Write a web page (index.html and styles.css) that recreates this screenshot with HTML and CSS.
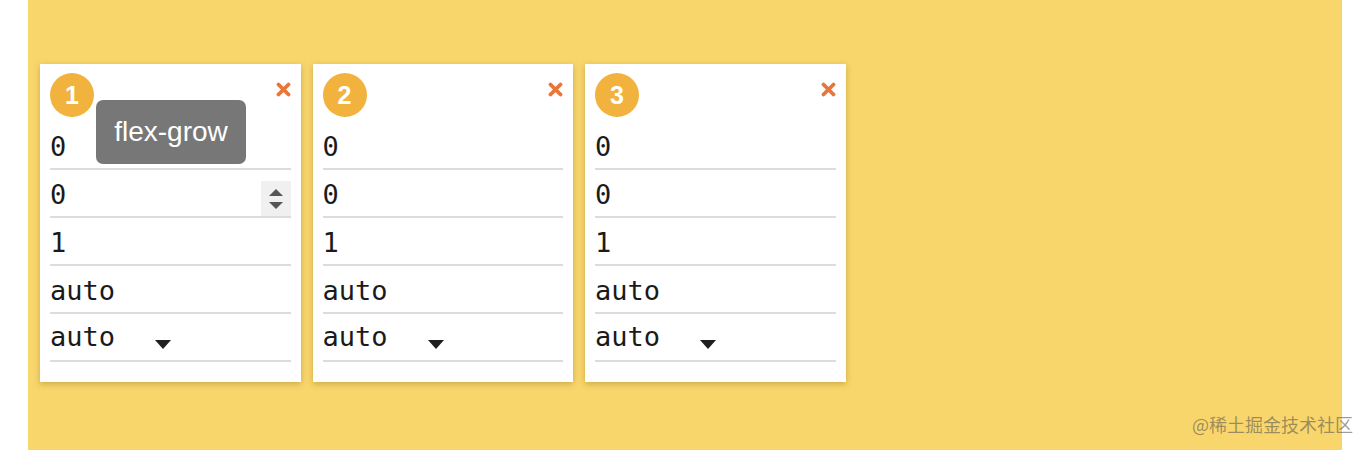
FILE: index.html
```html
<!DOCTYPE html>
<html lang="en">
<head>
<meta charset="utf-8">
<title>flex items</title>
<link rel="stylesheet" href="styles.css">
</head>
<body>
<div class="stage">
  <div class="card">
    <div class="card-head">
      <span class="badge">1</span>
      <svg class="close" width="15" height="15" viewBox="0 0 15 15"><path d="M2.5 2.5 L12.5 12.5 M12.5 2.5 L2.5 12.5" stroke="#e8763a" stroke-width="3.8" stroke-linecap="round"/></svg>
    </div>
    <div class="field">0</div>
    <div class="field">0<span class="spinner"><span class="tri-up"></span><span class="tri-down"></span></span></div>
    <div class="field">1</div>
    <div class="field">auto</div>
    <div class="field select"><span class="sel-text">auto</span><span class="caret"></span></div>
    <div class="tooltip">flex-grow</div>
  </div>
  <div class="card">
    <div class="card-head">
      <span class="badge">2</span>
      <svg class="close" width="15" height="15" viewBox="0 0 15 15"><path d="M2.5 2.5 L12.5 12.5 M12.5 2.5 L2.5 12.5" stroke="#e8763a" stroke-width="3.8" stroke-linecap="round"/></svg>
    </div>
    <div class="field">0</div>
    <div class="field">0</div>
    <div class="field">1</div>
    <div class="field">auto</div>
    <div class="field select"><span class="sel-text">auto</span><span class="caret"></span></div>
  </div>
  <div class="card">
    <div class="card-head">
      <span class="badge">3</span>
      <svg class="close" width="15" height="15" viewBox="0 0 15 15"><path d="M2.5 2.5 L12.5 12.5 M12.5 2.5 L2.5 12.5" stroke="#e8763a" stroke-width="3.8" stroke-linecap="round"/></svg>
    </div>
    <div class="field">0</div>
    <div class="field">0</div>
    <div class="field">1</div>
    <div class="field">auto</div>
    <div class="field select"><span class="sel-text">auto</span><span class="caret"></span></div>
  </div>
</div>
<div class="watermark">@稀土掘金技术社区</div>
</body>
</html>
```
FILE: styles.css
```css
html, body {
  margin: 0;
  padding: 0;
  background: #ffffff;
  overflow: hidden;
}
body {
  width: 1368px;
  height: 450px;
  position: relative;
  font-family: "Liberation Sans", Arial, sans-serif;
}
.stage {
  margin-left: 28px;
  width: 1314px;
  height: 450px;
  box-sizing: border-box;
  background: #f8d66c;
  padding: 64px 12px 0;
  display: flex;
  align-items: flex-start;
  gap: 12px;
}
.card {
  position: relative;
  width: 260.5px;
  box-sizing: border-box;
  background: #ffffff;
  padding: 9px 10px 20px;
  box-shadow: 0 2px 6px rgba(120, 90, 0, 0.35);
}
.card-head {
  height: 49px;
  display: flex;
  justify-content: space-between;
  align-items: flex-start;
}
.badge {
  width: 44px;
  height: 44px;
  border-radius: 50%;
  background: #f2b33e;
  color: #ffffff;
  font-weight: bold;
  font-size: 25px;
  line-height: 45px;
  text-align: center;
}
.close {
  margin-top: 9px;
  margin-right: 0;
}
.field {
  position: relative;
  height: 48px;
  box-sizing: border-box;
  padding-top: 3px;
  border-bottom: 2px solid #dcdcdc;
  font-family: "DejaVu Sans Mono", "Liberation Mono", monospace;
  font-size: 27px;
  line-height: 44px;
  color: #1a1a1a;
}
.field.select {
  padding-top: 1px;
  display: flex;
  align-items: flex-start;
}
.sel-text {
  width: 105px;
}
.caret {
  margin-top: 25px;
  width: 0;
  height: 0;
  border-left: 8px solid transparent;
  border-right: 8px solid transparent;
  border-top: 9px solid #1f1f1f;
}
.spinner {
  position: absolute;
  right: 0;
  top: 11px;
  width: 30px;
  height: 35px;
  background: #f0f0f0;
  display: flex;
  flex-direction: column;
  align-items: center;
  justify-content: center;
  gap: 6px;
}
.tri-up {
  width: 0;
  height: 0;
  border-left: 7px solid transparent;
  border-right: 7px solid transparent;
  border-bottom: 7px solid #555555;
}
.tri-down {
  width: 0;
  height: 0;
  border-left: 7px solid transparent;
  border-right: 7px solid transparent;
  border-top: 7px solid #555555;
}
.tooltip {
  position: absolute;
  left: 56px;
  top: 36px;
  width: 150px;
  height: 64px;
  box-sizing: border-box;
  border-radius: 7px;
  background: #777777;
  color: #ffffff;
  font-family: "Liberation Sans", Arial, sans-serif;
  font-size: 28px;
  line-height: 64px;
  text-align: center;
}
.watermark {
  position: absolute;
  left: 1192px;
  top: 412px;
  font-family: "Noto Sans CJK SC", "Liberation Sans", sans-serif;
  font-size: 18px;
  line-height: 24px;
  color: rgba(95, 90, 80, 0.6);
  white-space: nowrap;
}
```
